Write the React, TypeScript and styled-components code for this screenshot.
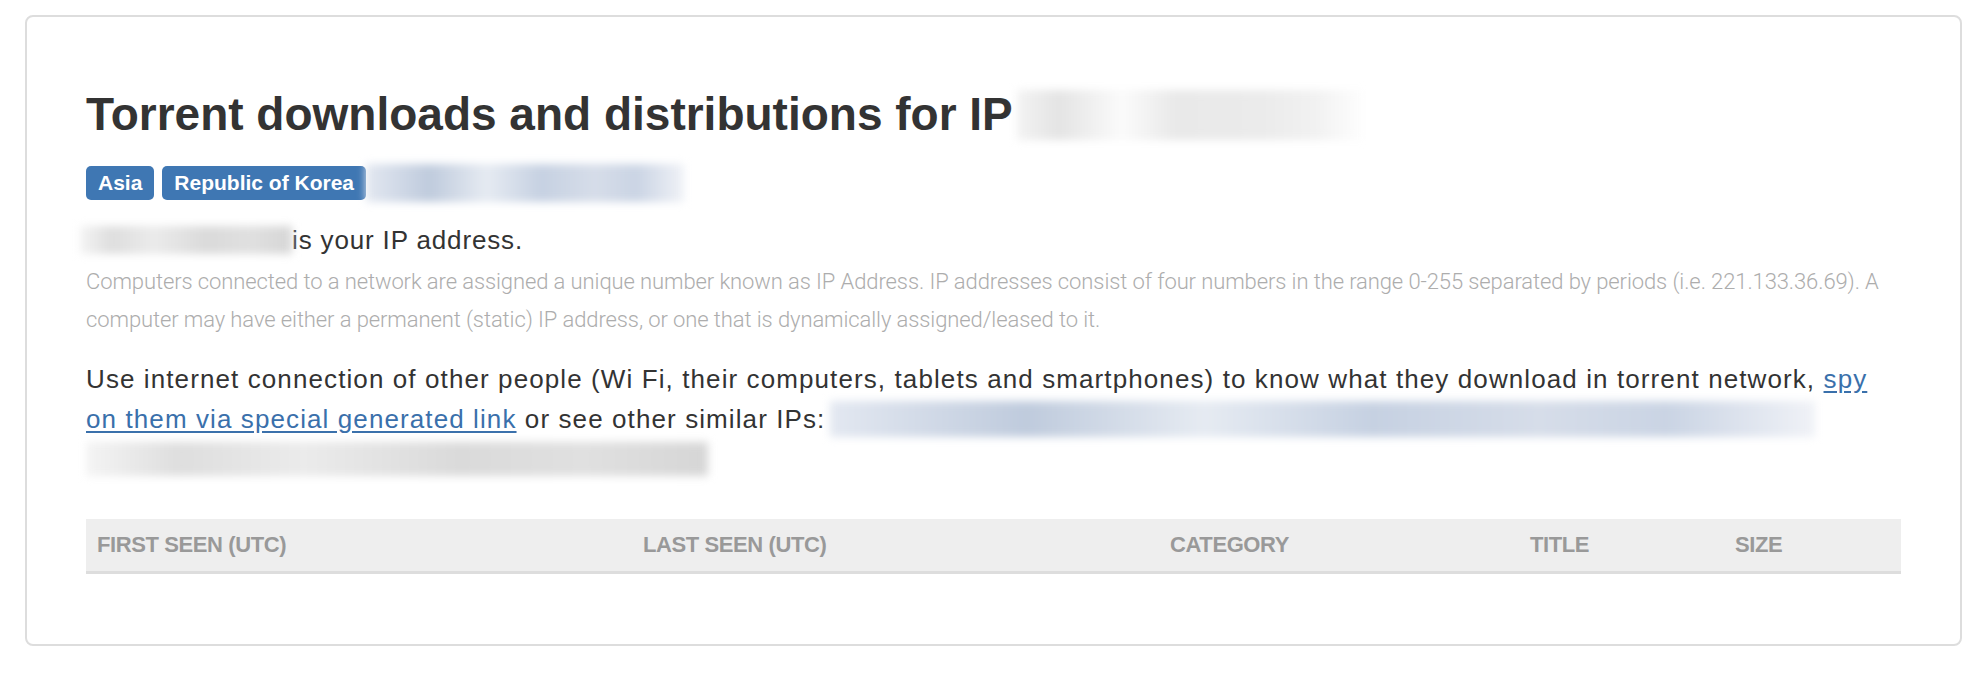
import styled, { createGlobalStyle } from "styled-components";

const GlobalStyle = createGlobalStyle`
  html, body {
    margin: 0;
    padding: 0;
    background: #ffffff;
  }
  body {
    font-family: "Liberation Sans", Arial, sans-serif;
    color: #333333;
  }
`;

type Tone = "grey" | "light" | "blue";

interface BlurProps {
  $w: number;
  $h: number;
  $tone: Tone;
  $shift?: number;
  $pull?: number;
}

const tones: Record<Tone, string> = {
  light:
    "linear-gradient(90deg, #f3f3f3 0%, #e4e4e4 12%, #fbfbfb 30%, #e9e9e9 45%, #ebebeb 70%, #f1f1f1 85%, #ffffff 100%)",
  grey:
    "linear-gradient(90deg, #f4f4f4 0%, #dedede 15%, #ebebeb 35%, #dadada 60%, #e0e0e0 80%, #d6d6d6 100%)",
  blue:
    "linear-gradient(90deg, #e3e8f1 0%, #bfcbdd 20%, #e6ebf2 38%, #c6d1e2 55%, #d6dde9 72%, #cad4e4 85%, #f0f2f7 100%)",
};

const Page = styled.div`
  padding: 15px 20px 30px 25px;
`;

const Card = styled.section`
  border: 2px solid #dddddd;
  border-radius: 8px;
  padding: 40px 59px 70px;
`;

const Title = styled.h1`
  margin: 31px 0 25px;
  font-size: 46px;
  line-height: 53px;
  font-weight: 700;
  color: #333333;
`;

const Blur = styled.span<BlurProps>`
  display: inline-block;
  width: ${(p) => p.$w}px;
  height: ${(p) => p.$h}px;
  margin-left: ${(p) => p.$pull ?? 0}px;
  background: ${(p) => tones[p.$tone]};
  filter: blur(4px);
  vertical-align: ${(p) => p.$shift ?? 0}px;
`;

const Badges = styled.div`
  display: flex;
  align-items: center;
  gap: 8px;
  height: 34px;
`;

const Badge = styled.span`
  display: inline-flex;
  align-items: center;
  height: 34px;
  padding: 0 12px;
  border-radius: 5px;
  background: #3f77b3;
  color: #ffffff;
  font-size: 21px;
  font-weight: 700;
`;

const IpLine = styled.p`
  margin: 20px 0 0;
  font-size: 26px;
  letter-spacing: 0.85px;
  line-height: 40px;
  color: #333333;
`;

const Note = styled.p`
  margin: 3px 0 0;
  font-family: Roboto, "Liberation Sans", sans-serif;
  font-weight: 300;
  font-size: 22px;
  letter-spacing: -0.1px;
  line-height: 38px;
  color: #adadad;
`;

const Lead = styled.p`
  margin: 20px 0 0;
  font-size: 26px;
  letter-spacing: 1.1px;
  line-height: 40px;
  color: #333333;
`;

const SpyLink = styled.a`
  color: #3a70ab;
  text-decoration: underline;
  text-underline-offset: 3px;
`;

const Table = styled.div`
  margin-top: 40px;
  display: grid;
  grid-template-columns: 546px 527px 360px 205px 1fr;
  background: #eeeeee;
  border-bottom: 3px solid #dddddd;
`;

const HeadCell = styled.div`
  padding: 0 11px;
  height: 52px;
  line-height: 52px;
  font-size: 22px;
  font-weight: 700;
  letter-spacing: -0.4px;
  color: #999999;
  text-transform: uppercase;
  white-space: nowrap;
`;

const columns = ["First seen (UTC)", "Last seen (UTC)", "Category", "Title", "Size"];

export default function App() {
  return (
    <>
      <GlobalStyle />
      <Page>
        <Card>
          <Title>
            Torrent downloads and distributions for IP
            <Blur $w={350} $h={50} $tone="light" $shift={-10} $pull={4} />
          </Title>
          <Badges>
            <Badge>Asia</Badge>
            <Badge>Republic of Korea</Badge>
            <Blur $w={318} $h={38} $tone="blue" $pull={-8} />
          </Badges>
          <IpLine>
            <Blur $w={212} $h={28} $tone="grey" $shift={-5} $pull={-6} />
            is your IP address.
          </IpLine>
          <Note>
            Computers connected to a network are assigned a unique number known as IP Address. IP
            addresses consist of four numbers in the range 0-255 separated by periods (i.e.
            221.133.36.69). A computer may have either a permanent (static) IP address, or one that
            is dynamically assigned/leased to it.
          </Note>
          <Lead>
            Use internet connection of other people (Wi Fi, their computers, tablets and
            smartphones) to know what they download in torrent network,{" "}
            <SpyLink href="#">spy on them via special generated link</SpyLink> or see other similar
            IPs: <Blur $w={985} $h={36} $tone="blue" $shift={-9} $pull={-4} />{" "}
            <Blur $w={622} $h={34} $tone="grey" $shift={-8} />
          </Lead>
          <Table>
            {columns.map((c) => (
              <HeadCell key={c}>{c}</HeadCell>
            ))}
          </Table>
        </Card>
      </Page>
    </>
  );
}
